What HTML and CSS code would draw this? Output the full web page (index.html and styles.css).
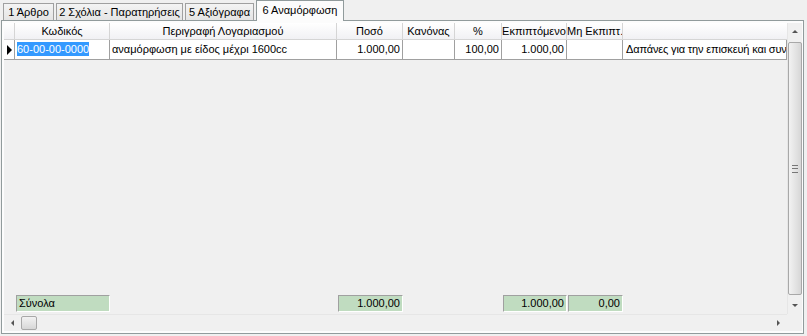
FILE: index.html
```html
<!DOCTYPE html>
<html lang="el">
<head>
    <meta charset="UTF-8">
    <title>Αναμόρφωση</title>
    <link rel="stylesheet" href="styles.css">
</head>
<body>
    <div class="tabs">
        <div class="tab t1">1 Άρθρο</div>
        <div class="tab t2">2 Σχόλια - Παρατηρήσεις</div>
        <div class="tab t3">5 Αξιόγραφα</div>
        <div class="tab active">6 Αναμόρφωση</div>
    </div>

    <div class="panel">
        <div class="grid">
            <div class="grid-body">
                <div class="cols header">
                    <div class="cell ind"></div>
                    <div class="cell">Κωδικός</div>
                    <div class="cell">Περιγραφή Λογαριασμού</div>
                    <div class="cell">Ποσό</div>
                    <div class="cell">Κανόνας</div>
                    <div class="cell">%</div>
                    <div class="cell">Εκπιπτόμενο</div>
                    <div class="cell">Μη Εκπιπτ.</div>
                    <div class="cell"></div>
                </div>
                <div class="cols row">
                    <div class="cell ind"><span class="arrow"></span></div>
                    <div class="cell"><span class="selected">60-00-00-0000</span></div>
                    <div class="cell">αναμόρφωση με είδος μέχρι 1600cc</div>
                    <div class="cell num">1.000,00</div>
                    <div class="cell"></div>
                    <div class="cell num">100,00</div>
                    <div class="cell num">1.000,00</div>
                    <div class="cell"></div>
                    <div class="cell desc">Δαπάνες για την επισκευή και συν</div>
                </div>
                <div class="spacer"></div>
                <div class="cols totals">
                    <div></div>
                    <div class="sum">Σύνολα</div>
                    <div></div>
                    <div class="sum num">1.000,00</div>
                    <div></div>
                    <div></div>
                    <div class="sum num">1.000,00</div>
                    <div class="sum num">0,00</div>
                    <div></div>
                </div>
            </div>

            <div class="vscroll">
                <div class="btn"><span class="tri up"></span></div>
                <div class="thumb v"><span class="grip"></span></div>
                <div class="btn"><span class="tri down"></span></div>
            </div>

            <div class="hscroll">
                <div class="btn"><span class="tri left"></span></div>
                <div class="thumb h"></div>
                <div class="track"></div>
                <div class="btn"><span class="tri right"></span></div>
            </div>
            <div class="corner"></div>
        </div>
    </div>
</body>
</html>
```

FILE: styles.css
```css
body {
    margin: 0;
    background-color: #f0f0f0;
    font-family: "Liberation Sans", Arial, sans-serif;
    font-size: 11px;
    color: #000;
}
.tabs {
    display: flex;
    align-items: flex-end;
    gap: 2px;
    height: 20px;
    padding-left: 3px;
}
.tab {
    box-sizing: border-box;
    height: 17px;
    line-height: 16px;
    text-align: center;
    white-space: nowrap;
    border: 1px solid #a0a0a0;
    border-bottom: none;
    background: linear-gradient(#f4f4f4, #e4e4e4);
}
.t1 {
    width: 51px;
}
.t2 {
    width: 127px;
}
.t3 {
    width: 69px;
}
.tab.active {
    width: 88px;
    height: 21px;
    line-height: 19px;
    margin-bottom: -1px;
    background-color: #fcfcfc;
    background-image: none;
    border-color: #919b9c;
    position: relative;
}
.panel {
    margin-left: 1px;
    width: 797px;
    height: 308px;
    padding: 2px;
    border: 1px solid #919b9c;
    background-color: #fcfcfc;
}
.grid {
    display: grid;
    grid-template-columns: 783px 15px;
    grid-template-rows: 1fr 17px;
    height: 100%;
    background-color: #f0f0f0;
}
.grid-body {
    display: flex;
    flex-direction: column;
}
.cols {
    display: grid;
    grid-template-columns: 11px 95px 227px 66px 52px 47px 65px 56px 1fr;
}
.cell {
    border-right: 1px solid #d5d5d5;
    padding: 0 3px;
    white-space: nowrap;
    overflow: hidden;
}
.header {
    height: 16px;
    line-height: 16px;
    background: linear-gradient(#ffffff, #f1f1f4);
    border-bottom: 1px solid #d5d5d5;
    text-align: center;
}
.header .cell {
    padding: 0;
}
.header .cell:last-child {
    border-right: none;
}
.row {
    height: 19px;
    line-height: 18px;
    background-color: #fff;
    border-bottom: 1px solid #a0a0a0;
}
.row .cell {
    border-right-color: #a0a0a0;
    padding: 0 2px;
}
.row .cell.desc {
    padding-left: 3px;
    letter-spacing: -0.15px;
}
.cell.ind {
    padding: 0;
    display: flex;
    align-items: center;
    justify-content: center;
}
.arrow {
    width: 0;
    height: 0;
    border-top: 5px solid transparent;
    border-bottom: 5px solid transparent;
    border-left: 5px solid #000;
}
.num {
    text-align: right;
}
.selected {
    background-color: #3399ff;
    color: #fff;
    padding: 1px 0;
}
.spacer {
    flex: 1;
}
.totals {
    height: 16px;
    line-height: 15px;
    margin-bottom: 3px;
}
.sum {
    background-color: #c0dcc0;
    border-top: 1px solid #a0a0a0;
    border-left: 1px solid #a0a0a0;
    border-bottom: 1px solid #fff;
    border-right: 1px solid #fff;
    padding: 0 2px;
    margin-left: 1px;
}
.vscroll {
    display: flex;
    flex-direction: column;
    background-color: #f0f0f0;
    border-left: 1px solid #e6e6e6;
}
.vscroll .btn {
    height: 17px;
}
.btn {
    display: flex;
    align-items: center;
    justify-content: center;
    flex-shrink: 0;
}
.thumb {
    border: 1px solid #a8a8a8;
    border-radius: 2px;
    display: flex;
    align-items: center;
    justify-content: center;
}
.thumb.v {
    flex: 1;
    margin: 2px 0;
    background: linear-gradient(to right, #f2f2f2, #e2e2e2 60%, #d6d6d6);
}
.grip {
    width: 6px;
    height: 6px;
    border-top: 1px solid #777;
    border-bottom: 1px solid #777;
    background: linear-gradient(transparent 2px, #777 2px, #777 3px, transparent 3px);
}
.hscroll {
    display: flex;
    align-items: stretch;
    border-top: 1px solid #e6e6e6;
    background-color: #f0f0f0;
}
.hscroll .btn {
    width: 17px;
}
.thumb.h {
    width: 14px;
    margin: 1px 0;
    background: linear-gradient(#f2f2f2, #e2e2e2 60%, #d6d6d6);
}
.track {
    flex: 1;
}
.corner {
    background-color: #f0f0f0;
}
.tri {
    width: 0;
    height: 0;
}
.tri.up {
    border-left: 3px solid transparent;
    border-right: 3px solid transparent;
    border-bottom: 3px solid #555;
}
.tri.down {
    border-left: 3px solid transparent;
    border-right: 3px solid transparent;
    border-top: 3px solid #555;
}
.tri.left {
    border-top: 3px solid transparent;
    border-bottom: 3px solid transparent;
    border-right: 3px solid #555;
}
.tri.right {
    border-top: 3px solid transparent;
    border-bottom: 3px solid transparent;
    border-left: 3px solid #555;
}
```
